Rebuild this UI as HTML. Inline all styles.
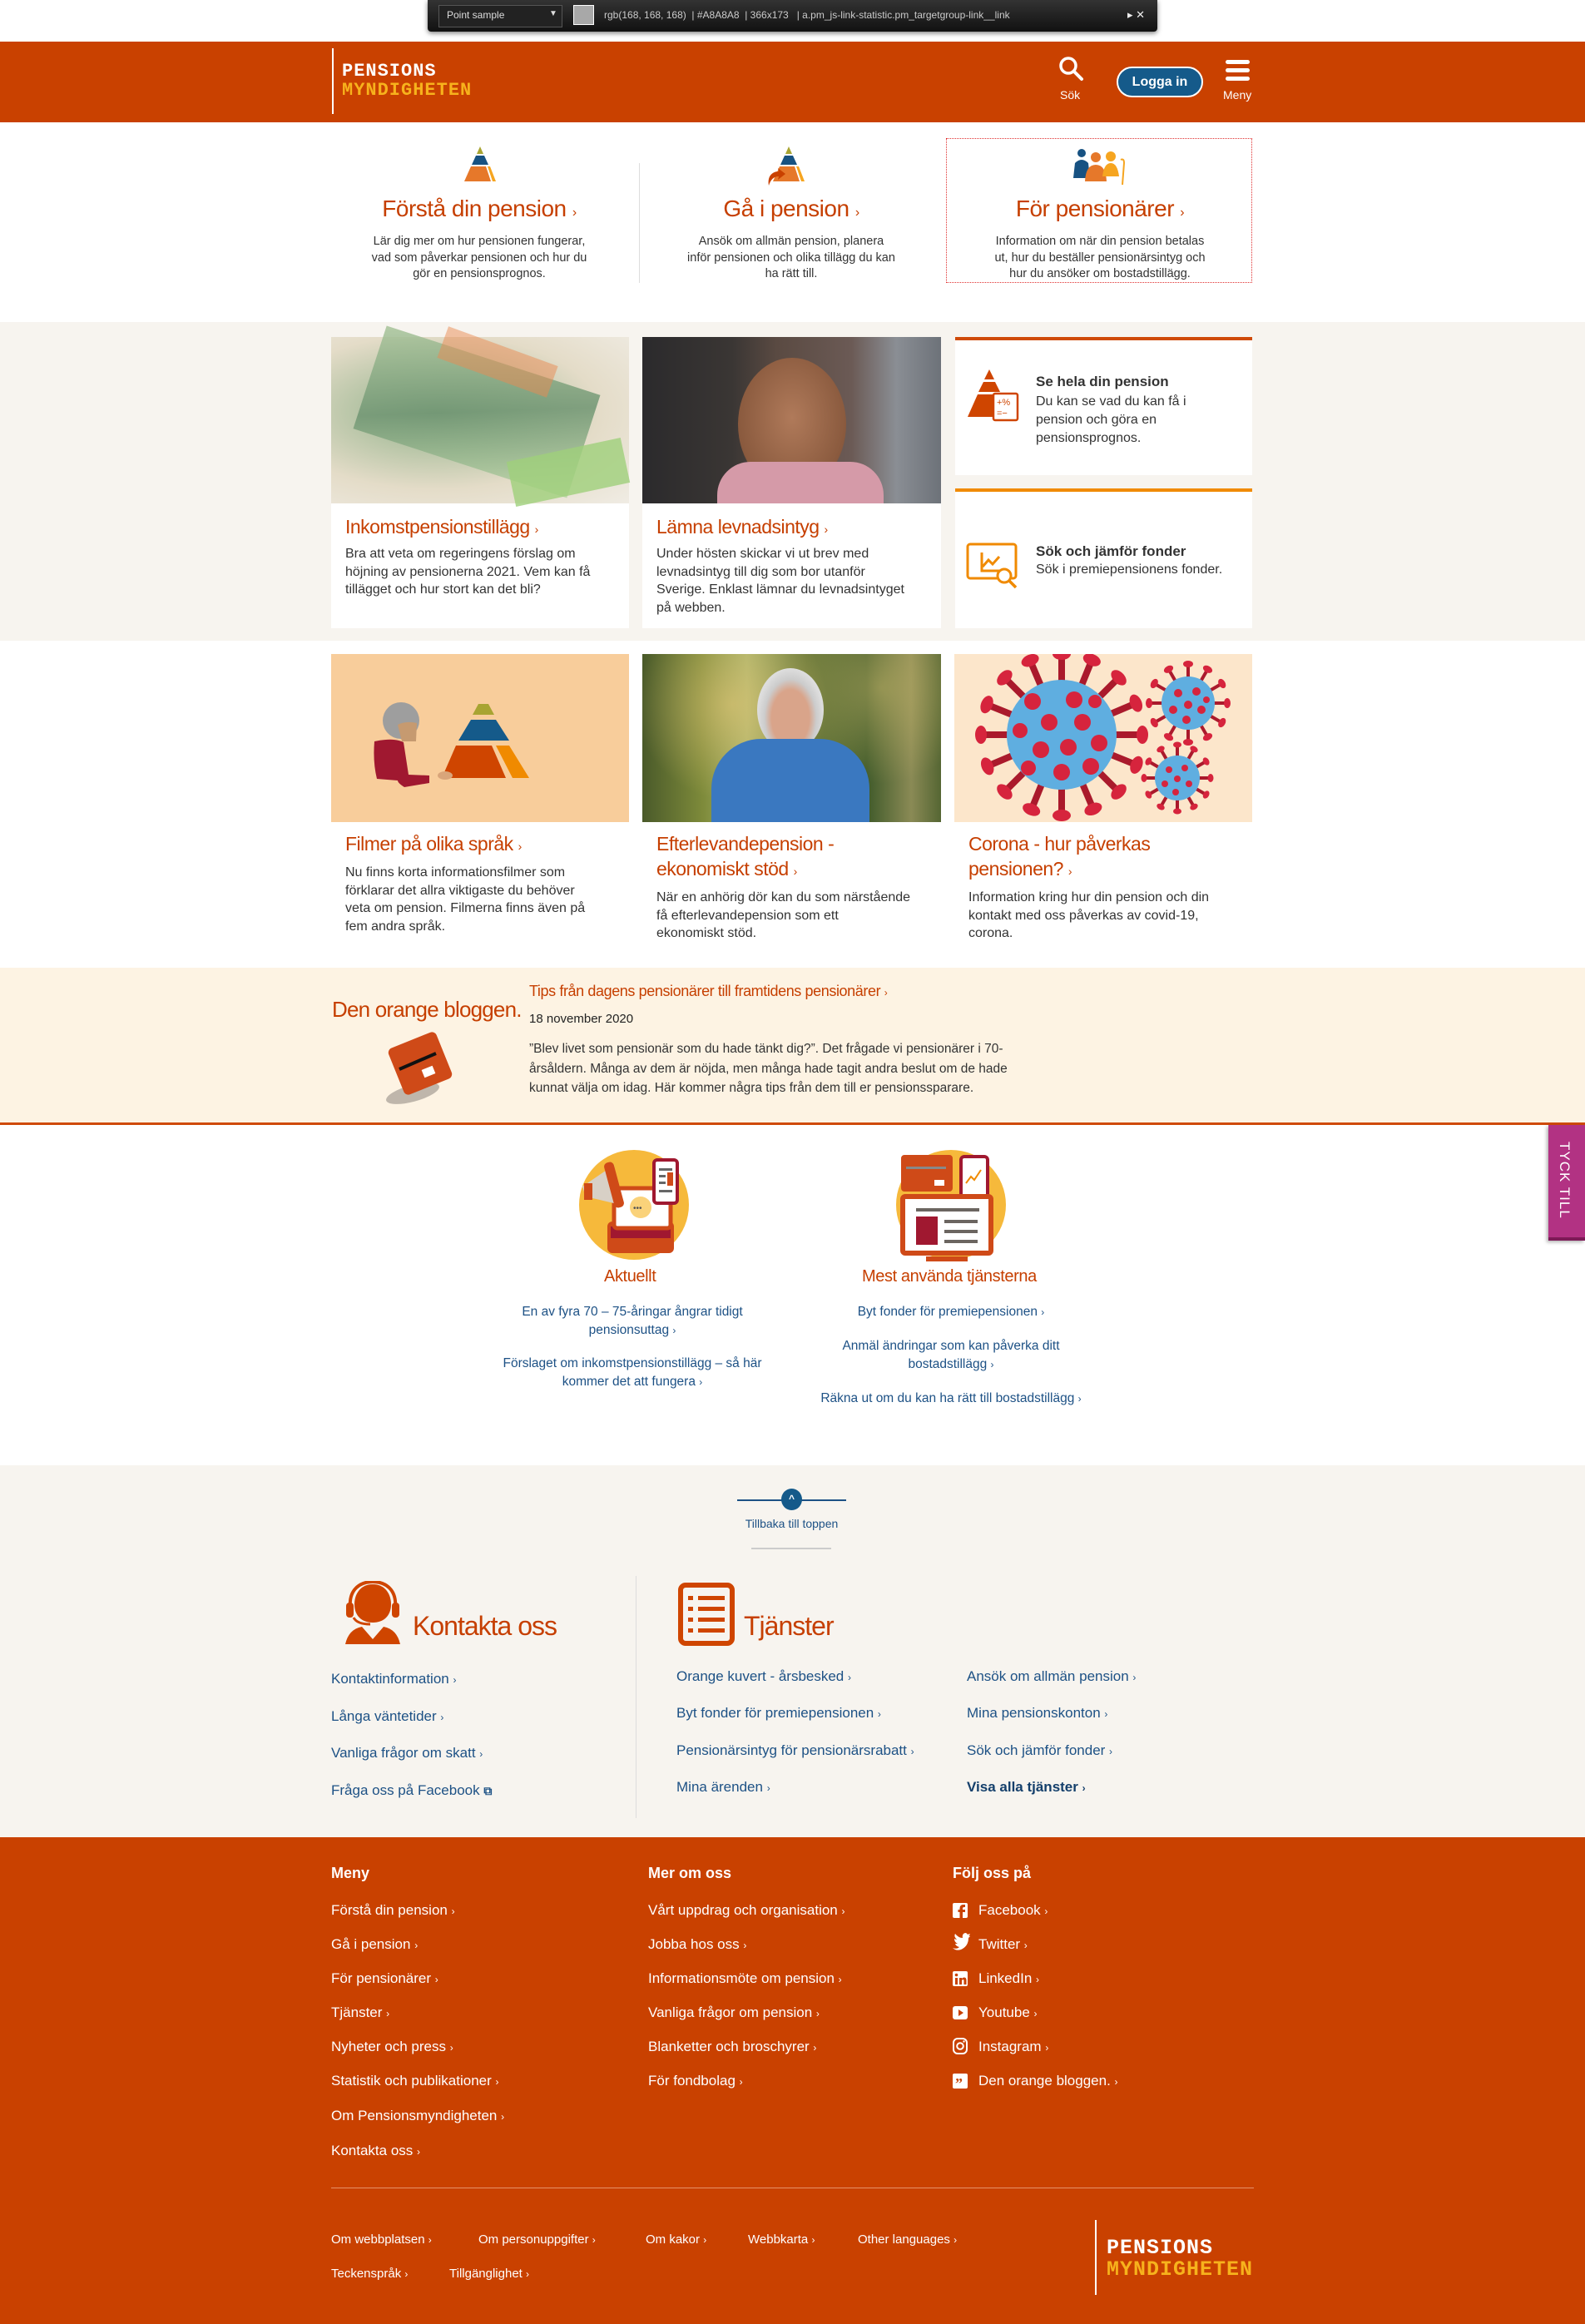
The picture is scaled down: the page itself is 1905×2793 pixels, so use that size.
<!DOCTYPE html>
<html><head><meta charset="utf-8">
<style>
*{margin:0;padding:0;box-sizing:border-box}
body{width:1905px;height:2793px;position:relative;overflow:hidden;background:#fff;font-family:"Liberation Sans",Arial,sans-serif;color:#333}
.a{position:absolute}
.t{position:absolute;white-space:nowrap}
.nav-t{font-size:28px;color:#c63f00;text-align:center;width:370px;letter-spacing:-0.5px}
.nav-d{font-size:14.5px;line-height:19.5px;text-align:center;width:370px;color:#333}
.card{position:absolute;background:#fff}
.ct{font-size:23px;color:#c63f00;letter-spacing:-0.5px;line-height:30px}
.cd{font-size:16px;line-height:21.5px;color:#333}
.lk{color:#1d5185;font-size:16px}
.fl{color:#fff;font-size:17px;position:absolute;white-space:nowrap;line-height:20px}
.ch{font-size:12px}
.logo1{font-family:"Liberation Mono",monospace;font-weight:bold;font-size:22px;letter-spacing:1px;line-height:23px}
</style></head><body>

<div class="a" style="left:514px;top:0;width:877px;height:38px;background:linear-gradient(#333,#111);border-radius:0 0 4px 4px;box-shadow:0 2px 6px rgba(0,0,0,.5)"></div>
<div class="a" style="left:527px;top:6px;width:149px;height:27px;border:1px solid #555;background:#222"></div>
<div class="t" style="left:537px;top:11px;color:#ddd;font-size:12px">Point sample</div>
<div class="t" style="left:660px;top:11px;color:#ddd;font-size:10px">▼</div>
<div class="a" style="left:689px;top:6px;width:25px;height:24px;background:#a8a8a8;border:1px solid #fff"></div>
<div class="t" style="left:726px;top:11px;color:#ccc;font-size:12px">rgb(168, 168, 168) &nbsp;| #A8A8A8 &nbsp;| 366x173 &nbsp; | a.pm_js-link-statistic.pm_targetgroup-link__link</div>
<div class="t" style="left:1355px;top:10px;color:#eee;font-size:13px">▸ ✕</div>

<div class="a" style="left:0;top:50px;width:1905px;height:97px;background:#c94100"></div>
<div class="a" style="left:399px;top:58px;width:2px;height:79px;background:#fff"></div>
<div class="t logo1" style="left:411px;top:74px;color:#fff">PENSIONS</div>
<div class="t logo1" style="left:411px;top:97px;color:#f7b21c">MYNDIGHETEN</div>
<svg class="a" style="left:1272px;top:67px" width="32" height="32" viewBox="0 0 32 32"><circle cx="12" cy="12" r="9" fill="none" stroke="#fff" stroke-width="3.5"/><line x1="18.5" y1="18.5" x2="28" y2="28" stroke="#fff" stroke-width="4" stroke-linecap="round"/></svg>
<div class="t" style="left:1274px;top:106px;color:#fff;font-size:14px">Sök</div>
<div class="a" style="left:1342px;top:80px;width:104px;height:37px;border:2px solid #fff;border-radius:19px;background:#155a8a;color:#fff;font-weight:bold;font-size:16px;text-align:center;line-height:33px">Logga in</div>
<div class="a" style="left:1473px;top:72px;width:29px;height:5px;background:#fff;border-radius:3px"></div>
<div class="a" style="left:1473px;top:82px;width:29px;height:5px;background:#fff;border-radius:3px"></div>
<div class="a" style="left:1473px;top:92px;width:29px;height:5px;background:#fff;border-radius:3px"></div>
<div class="t" style="left:1470px;top:106px;color:#fff;font-size:14px">Meny</div>

<svg class="a" style="left:556px;top:176px" width="42" height="44" viewBox="0 0 42 44"><polygon points="21,0 25,9 17,9" fill="#a8a432"/><polygon points="16,11 26,11 31,22 11,22" fill="#175282"/><polygon points="10,24 28,24 34,42 2,42" fill="#e6782a"/><polygon points="30,24 33,24 40,42 36,42" fill="#f6a520"/></svg>
<svg class="a" style="left:920px;top:176px" width="50" height="48" viewBox="0 0 50 48"><polygon points="28,0 32,9 24,9" fill="#a8a432"/><polygon points="23,11 33,11 38,22 18,22" fill="#175282"/><polygon points="17,24 35,24 41,42 9,42" fill="#e6782a"/><polygon points="37,24 40,24 47,42 43,42" fill="#f6a520"/><path d="M4,47 C2,36 8,30 16,30 L15,26 L24,33 L15,40 L16,36 C10,36 6,40 4,47Z" fill="#c94100"/></svg>
<svg class="a" style="left:1287px;top:176px" width="70" height="48" viewBox="0 0 70 48"><circle cx="13" cy="8" r="5" fill="#175282"/><path d="M3,38 L5,20 Q13,12 21,20 L23,38Z" fill="#175282"/><circle cx="30" cy="13" r="6" fill="#e6782a"/><path d="M17,42 Q18,22 30,22 Q42,22 43,42Z" fill="#e6782a"/><circle cx="48" cy="12" r="6" fill="#f6a520"/><path d="M38,36 Q40,20 48,20 Q56,20 58,36Z" fill="#f6a520"/><path d="M60,16 Q64,14 64,20 L62,46" stroke="#f6a520" stroke-width="2" fill="none"/></svg>
<div class="a" style="left:768px;top:196px;width:1px;height:144px;background:#ddd"></div>
<div class="a" style="left:1137px;top:166px;width:368px;height:174px;border:1px dotted #e03030"></div>
<div class="t nav-t" style="left:391px;top:235px">Förstå din pension <span style="font-size:16px">›</span></div>
<div class="t nav-t" style="left:766px;top:235px">Gå i pension <span style="font-size:16px">›</span></div>
<div class="t nav-t" style="left:1137px;top:235px">För pensionärer <span style="font-size:16px">›</span></div>
<div class="a nav-d" style="left:391px;top:281px">Lär dig mer om hur pensionen fungerar,<br>vad som påverkar pensionen och hur du<br>gör en pensionsprognos.</div>
<div class="a nav-d" style="left:766px;top:281px">Ansök om allmän pension, planera<br>inför pensionen och olika tillägg du kan<br>ha rätt till.</div>
<div class="a nav-d" style="left:1137px;top:281px">Information om när din pension betalas<br>ut, hur du beställer pensionärsintyg och<br>hur du ansöker om bostadstillägg.</div>

<div class="a" style="left:0;top:387px;width:1905px;height:383px;background:#f7f4ef"></div>
<div class="card" style="left:398px;top:405px;width:358px;height:350px">
 <div class="a" style="left:0;top:0;width:358px;height:200px;background:radial-gradient(ellipse at 35% 45%,#8fa98a 0%,#b9c6a8 30%,#e4dcc8 60%,#f0ece4 100%)"></div>
 <div class="a" style="left:40px;top:25px;width:270px;height:130px;background:linear-gradient(160deg,#a8c49a,#6f9572 50%,#bcd7a8);transform:rotate(18deg);opacity:.85"></div>
 <div class="a" style="left:215px;top:135px;width:140px;height:55px;background:#9fd07a;transform:rotate(-12deg);opacity:.8"></div>
 <div class="a" style="left:130px;top:10px;width:140px;height:40px;background:#e98a52;transform:rotate(20deg);opacity:.5"></div>
 <div class="t ct" style="left:17px;top:213px">Inkomstpensionstillägg <span style="font-size:14px">›</span></div>
 <div class="a cd" style="left:17px;top:250px">Bra att veta om regeringens förslag om<br>höjning av pensionerna 2021. Vem kan få<br>tillägget och hur stort kan det bli?</div>
</div>
<div class="card" style="left:772px;top:405px;width:359px;height:350px">
 <div class="a" style="left:0;top:0;width:359px;height:200px;background:linear-gradient(90deg,#2b2a2c 0%,#3a3634 30%,#5a4a42 45%,#6b5a55 70%,#8a8e94 85%,#6d7279 100%)"></div>
 <div class="a" style="left:115px;top:25px;width:130px;height:160px;border-radius:50%;background:radial-gradient(ellipse at 50% 45%,#b07a5a,#8a5a3e 70%,#4a3a33)"></div>
 <div class="a" style="left:90px;top:150px;width:200px;height:50px;background:#d59aa8;border-radius:40px 40px 0 0"></div>
 <div class="t ct" style="left:17px;top:213px">Lämna levnadsintyg <span style="font-size:14px">›</span></div>
 <div class="a cd" style="left:17px;top:250px">Under hösten skickar vi ut brev med<br>levnadsintyg till dig som bor utanför<br>Sverige. Enklast lämnar du levnadsintyget<br>på webben.</div>
</div>
<div class="card" style="left:1148px;top:405px;width:357px;height:166px;border-top:4px solid #cf4a08">
 <svg class="a" style="left:13px;top:30px" width="66" height="70" viewBox="0 0 66 70"><polygon points="28,5 34,17 22,17" fill="#cf4500"/><polygon points="21,20 35,20 41,32 15,32" fill="#cf4500"/><polygon points="14,35 42,35 52,62 2,62" fill="#cf4500"/><rect x="33" y="34" width="29" height="32" rx="2" fill="#fff" stroke="#cf4500" stroke-width="2.5"/><text x="37" y="48" font-size="11" fill="#cf4500" font-family="Liberation Sans">+%</text><text x="37" y="61" font-size="11" fill="#cf4500" font-family="Liberation Sans">=−</text></svg>
 <div class="t" style="left:97px;top:40px;font-size:17px;font-weight:bold;color:#333">Se hela din pension</div>
 <div class="a" style="left:97px;top:63px;font-size:16px;line-height:22px;color:#333">Du kan se vad du kan få i<br>pension och göra en<br>pensionsprognos.</div>
</div>
<div class="card" style="left:1148px;top:587px;width:357px;height:168px;border-top:4px solid #f08a00">
 <svg class="a" style="left:13px;top:61px" width="66" height="58" viewBox="0 0 66 58"><rect x="2" y="2" width="58" height="41" rx="3" fill="none" stroke="#f08a00" stroke-width="3"/><polyline points="19,12 19,34 40,34" fill="none" stroke="#f08a00" stroke-width="3"/><polyline points="20,29 27,21 32,26 40,17" fill="none" stroke="#f08a00" stroke-width="3"/><circle cx="46" cy="40" r="8" fill="#fff" stroke="#f08a00" stroke-width="3"/><line x1="52" y1="46" x2="60" y2="54" stroke="#f08a00" stroke-width="3.5"/></svg>
 <div class="t" style="left:97px;top:62px;font-size:17px;font-weight:bold;color:#333">Sök och jämför fonder</div>
 <div class="t" style="left:97px;top:85px;font-size:16px;color:#333">Sök i premiepensionens fonder.</div>
</div>

<div class="a" style="left:398px;top:786px;width:358px;height:202px;background:#f8cd9b"></div>
<svg class="a" style="left:398px;top:786px" width="358" height="202" viewBox="0 0 358 202"><circle cx="84" cy="80" r="22" fill="#9e9e9e"/><path d="M80,85 Q90,80 103,83 L102,105 L85,105Z" fill="#c69a70"/><path d="M52,105 Q75,100 87,106 L93,145 L118,146 L118,155 L88,160 Q80,155 80,152 L55,150 Q50,130 52,105Z" fill="#a01830"/><polygon points="177,60 189,60 196,73 170,73" fill="#a8a432"/><polygon points="168,79 198,79 214,104 153,104" fill="#155a8a"/><polygon points="150,110 193,110 210,149 133,149" fill="#cf4500"/><polygon points="198,110 214,110 238,149 218,149" fill="#f08a00"/><ellipse cx="137" cy="146" rx="9" ry="5" fill="#d9a57a"/></svg>
<div class="a" style="left:772px;top:786px;width:359px;height:202px;background:linear-gradient(90deg,#4a5a2a 0%,#7d8a3a 20%,#a9b36a 35%,#6c7a3a 55%,#3f5a2a 75%,#8a8a55 90%,#556633 100%)"></div>
<div class="a" style="left:772px;top:786px;width:359px;height:202px;background:radial-gradient(circle at 30% 30%,rgba(230,200,120,.6),transparent 40%),radial-gradient(circle at 80% 20%,rgba(210,190,110,.5),transparent 35%)"></div>
<div class="a" style="left:910px;top:803px;width:80px;height:100px;border-radius:50%;background:radial-gradient(ellipse at 50% 60%,#d9a48a 40%,#ccc 55%,#ddd 70%)"></div>
<div class="a" style="left:855px;top:888px;width:190px;height:100px;border-radius:60px 60px 0 0;background:#3a78c0"></div>
<div class="a" style="left:1147px;top:786px;width:358px;height:202px;background:#fce6cb"></div>
<svg class="a" style="left:1147px;top:786px" width="358" height="202" viewBox="0 0 358 202">
<defs>
<g id="sp"><rect x="-4" y="-94" width="8" height="32" fill="#aa1a2c"/><ellipse cx="0" cy="-97" rx="11" ry="7" fill="#d6243d"/></g>
<g id="sp2"><rect x="-2" y="-46" width="4" height="16" fill="#aa1a2c"/><ellipse cx="0" cy="-47" rx="6" ry="4" fill="#d6243d"/></g>
<g id="sp3"><rect x="-2" y="-39" width="4" height="13" fill="#aa1a2c"/><ellipse cx="0" cy="-40" rx="5" ry="3.5" fill="#d6243d"/></g>
<clipPath id="cp"><rect width="358" height="202"/></clipPath>
</defs>
<g clip-path="url(#cp)">
<g transform="translate(129,97)">
<use href="#sp"/><use href="#sp" transform="rotate(22)"/><use href="#sp" transform="rotate(45)"/><use href="#sp" transform="rotate(67)"/><use href="#sp" transform="rotate(90)"/><use href="#sp" transform="rotate(112)"/><use href="#sp" transform="rotate(135)"/><use href="#sp" transform="rotate(157)"/><use href="#sp" transform="rotate(180)"/><use href="#sp" transform="rotate(202)"/><use href="#sp" transform="rotate(225)"/><use href="#sp" transform="rotate(247)"/><use href="#sp" transform="rotate(270)"/><use href="#sp" transform="rotate(292)"/><use href="#sp" transform="rotate(315)"/><use href="#sp" transform="rotate(337)"/>
<circle r="66" fill="#5faee0"/>
<g fill="#d6243d"><circle cx="-35" cy="-40" r="10"/><circle cx="15" cy="-42" r="10"/><circle cx="-15" cy="-15" r="10"/><circle cx="25" cy="-15" r="10"/><circle cx="-50" cy="-5" r="9"/><circle cx="45" cy="10" r="10"/><circle cx="-25" cy="18" r="10"/><circle cx="8" cy="15" r="10"/><circle cx="-40" cy="40" r="9"/><circle cx="0" cy="45" r="10"/><circle cx="35" cy="38" r="10"/><circle cx="40" cy="-40" r="8"/></g>
</g>
<g transform="translate(281,59)">
<use href="#sp2"/><use href="#sp2" transform="rotate(30)"/><use href="#sp2" transform="rotate(60)"/><use href="#sp2" transform="rotate(90)"/><use href="#sp2" transform="rotate(120)"/><use href="#sp2" transform="rotate(150)"/><use href="#sp2" transform="rotate(180)"/><use href="#sp2" transform="rotate(210)"/><use href="#sp2" transform="rotate(240)"/><use href="#sp2" transform="rotate(270)"/><use href="#sp2" transform="rotate(300)"/><use href="#sp2" transform="rotate(330)"/>
<circle r="32" fill="#5faee0"/>
<g fill="#d6243d"><circle cx="-12" cy="-12" r="5"/><circle cx="10" cy="-14" r="5"/><circle cx="0" cy="2" r="5"/><circle cx="-18" cy="8" r="5"/><circle cx="16" cy="8" r="5"/><circle cx="-2" cy="20" r="5"/><circle cx="22" cy="-4" r="4"/></g>
</g>
<g transform="translate(268,149)">
<use href="#sp3"/><use href="#sp3" transform="rotate(30)"/><use href="#sp3" transform="rotate(60)"/><use href="#sp3" transform="rotate(90)"/><use href="#sp3" transform="rotate(120)"/><use href="#sp3" transform="rotate(150)"/><use href="#sp3" transform="rotate(180)"/><use href="#sp3" transform="rotate(210)"/><use href="#sp3" transform="rotate(240)"/><use href="#sp3" transform="rotate(270)"/><use href="#sp3" transform="rotate(300)"/><use href="#sp3" transform="rotate(330)"/>
<circle r="27" fill="#5faee0"/>
<g fill="#d6243d"><circle cx="-10" cy="-10" r="4"/><circle cx="9" cy="-12" r="4"/><circle cx="0" cy="1" r="4"/><circle cx="-15" cy="7" r="4"/><circle cx="14" cy="7" r="4"/><circle cx="-2" cy="17" r="4"/></g>
</g>
</g>
</svg>
<div class="t ct" style="left:415px;top:999px">Filmer på olika språk <span style="font-size:14px">›</span></div>
<div class="a cd" style="left:415px;top:1038px">Nu finns korta informationsfilmer som<br>förklarar det allra viktigaste du behöver<br>veta om pension. Filmerna finns även på<br>fem andra språk.</div>
<div class="a ct" style="left:789px;top:999px">Efterlevandepension -<br>ekonomiskt stöd <span style="font-size:14px">›</span></div>
<div class="a cd" style="left:789px;top:1068px">När en anhörig dör kan du som närstående<br>få efterlevandepension som ett<br>ekonomiskt stöd.</div>
<div class="a ct" style="left:1164px;top:999px">Corona - hur påverkas<br>pensionen? <span style="font-size:14px">›</span></div>
<div class="a cd" style="left:1164px;top:1068px">Information kring hur din pension och din<br>kontakt med oss påverkas av covid-19,<br>corona.</div>

<div class="a" style="left:0;top:1163px;width:1905px;height:189px;background:#fdf3e3;border-bottom:3px solid #cf4a08"></div>
<div class="t" style="left:399px;top:1198px;font-size:26px;color:#c63f00;letter-spacing:-0.8px">Den orange bloggen.</div>
<svg class="a" style="left:458px;top:1228px" width="100" height="102" viewBox="0 0 100 102"><ellipse cx="38" cy="86" rx="33" ry="10" fill="#bfb6ab" transform="rotate(-15 38 86)"/><rect x="16" y="20" width="62" height="60" rx="6" fill="#cf4a18" transform="rotate(-22 47 50)"/><line x1="22" y1="57" x2="66" y2="38" stroke="#111" stroke-width="4"/><rect x="50" y="55" width="14" height="10" fill="#fff" transform="rotate(-22 57 60)"/></svg>
<div class="t" style="left:636px;top:1181px;font-size:18px;color:#c63f00;letter-spacing:-0.4px">Tips från dagens pensionärer till framtidens pensionärer <span style="font-size:12px">›</span></div>
<div class="t" style="left:636px;top:1216px;font-size:15px;color:#222">18 november 2020</div>
<div class="a" style="left:636px;top:1249px;font-size:15.5px;line-height:23.5px;color:#333">”Blev livet som pensionär som du hade tänkt dig?”. Det frågade vi pensionärer i 70-<br>årsåldern. Många av dem är nöjda, men många hade tagit andra beslut om de hade<br>kunnat välja om idag. Här kommer några tips från dem till er pensionssparare.</div>

<div class="a" style="left:1861px;top:1352px;width:44px;height:139px;background:#b23283;border-bottom:4px solid #7d1a57;box-shadow:-2px 2px 4px rgba(0,0,0,.3)"></div>
<div class="a" style="left:1870px;top:1372px;writing-mode:vertical-rl;color:#fff;font-size:17px;letter-spacing:1px">TYCK TILL</div>

<svg class="a" style="left:690px;top:1378px" width="150" height="142" viewBox="0 0 150 142"><ellipse cx="72" cy="70" rx="66" ry="66" fill="#f6b93b"/><rect x="40" y="90" width="80" height="38" rx="6" fill="#cf4a18"/><rect x="44" y="96" width="72" height="14" fill="#a01830"/><rect x="48" y="50" width="68" height="48" rx="4" fill="#fff" stroke="#cf4a18" stroke-width="5"/><circle cx="80" cy="73" r="13" fill="#fad27a"/><text x="71" y="77" font-size="10" fill="#555" font-family="Liberation Sans">•••</text><rect x="96" y="16" width="28" height="52" rx="4" fill="#fff" stroke="#a01830" stroke-width="4"/><g fill="#666"><rect x="102" y="26" width="16" height="3"/><rect x="102" y="34" width="8" height="3"/><rect x="102" y="42" width="8" height="3"/><rect x="102" y="52" width="16" height="3"/></g><rect x="112" y="31" width="7" height="16" fill="#cf4a18"/><polygon points="10,48 48,22 56,70 14,60" fill="#d8d0c6"/><rect x="42" y="18" width="12" height="56" rx="5" fill="#cf4a18" transform="rotate(-15 48 46)"/><rect x="12" y="44" width="10" height="20" fill="#cf4a18"/></svg>
<svg class="a" style="left:1075px;top:1378px" width="140" height="142" viewBox="0 0 140 142"><ellipse cx="68" cy="70" rx="66" ry="66" fill="#f6b93b"/><rect x="8" y="10" width="62" height="44" rx="4" fill="#cf4a18"/><rect x="14" y="24" width="48" height="3" fill="#888"/><rect x="48" y="40" width="12" height="7" fill="#fff"/><rect x="80" y="12" width="32" height="54" rx="4" fill="#fff" stroke="#a01830" stroke-width="4"/><polyline points="86,44 92,36 96,40 104,28" stroke="#f08a00" stroke-width="2" fill="none"/><rect x="10" y="60" width="106" height="68" rx="3" fill="#fff" stroke="#cf4a18" stroke-width="6"/><g fill="#6b6560"><rect x="26" y="74" width="76" height="4"/><rect x="60" y="88" width="40" height="4"/><rect x="60" y="100" width="40" height="4"/><rect x="60" y="112" width="40" height="4"/></g><rect x="26" y="84" width="26" height="34" fill="#a01830"/><rect x="38" y="132" width="50" height="6" fill="#cf4a18"/></svg>
<div class="t" style="left:726px;top:1523px;font-size:20px;color:#c63f00;letter-spacing:-0.4px">Aktuellt</div>
<div class="t" style="left:1036px;top:1523px;font-size:20px;color:#c63f00;letter-spacing:-0.4px">Mest använda tjänsterna</div>
<div class="a lk" style="left:560px;top:1566px;width:400px;text-align:center;line-height:21.5px;font-size:15.5px">En av fyra 70 – 75-åringar ångrar tidigt<br>pensionsuttag <span class="ch">›</span></div>
<div class="a lk" style="left:560px;top:1628px;width:400px;text-align:center;line-height:21.5px;font-size:15.5px">Förslaget om inkomstpensionstillägg – så här<br>kommer det att fungera <span class="ch">›</span></div>
<div class="a lk" style="left:943px;top:1566px;width:400px;text-align:center;line-height:21.5px;font-size:15.5px">Byt fonder för premiepensionen <span class="ch">›</span></div>
<div class="a lk" style="left:943px;top:1607px;width:400px;text-align:center;line-height:21.5px;font-size:15.5px">Anmäl ändringar som kan påverka ditt<br>bostadstillägg <span class="ch">›</span></div>
<div class="a lk" style="left:943px;top:1670px;width:400px;text-align:center;line-height:21.5px;font-size:15.5px">Räkna ut om du kan ha rätt till bostadstillägg <span class="ch">›</span></div>

<div class="a" style="left:0;top:1761px;width:1905px;height:447px;background:#f7f4ef"></div>
<div class="a" style="left:886px;top:1802px;width:131px;height:2px;background:#1d5185"></div>
<div class="a" style="left:939px;top:1789px;width:25px;height:26px;border-radius:50%;background:#155a8a;color:#fff;font-size:12px;text-align:center;line-height:24px;font-weight:bold">^</div>
<div class="t lk" style="left:886px;top:1823px;font-size:14px;width:131px;text-align:center">Tillbaka till toppen</div>
<div class="a" style="left:903px;top:1860px;width:96px;height:2px;background:#ccc"></div>
<svg class="a" style="left:413px;top:1900px" width="70" height="78" viewBox="0 0 70 78"><path d="M35,4 C20,4 13,16 13,28 C13,42 22,50 35,50 C48,50 57,42 57,28 C57,16 50,4 35,4Z" fill="#cf4500"/><path d="M8,32 C6,10 20,1 35,1 C50,1 64,10 62,32" fill="none" stroke="#cf4500" stroke-width="4"/><rect x="3" y="26" width="9" height="18" rx="4" fill="#cf4500"/><rect x="58" y="26" width="9" height="18" rx="4" fill="#cf4500"/><path d="M12,44 Q16,52 32,52" fill="none" stroke="#cf4500" stroke-width="3"/><path d="M2,76 Q6,58 22,55 L35,70 L48,55 Q64,58 68,76Z" fill="#cf4500"/></svg>
<div class="t" style="left:496px;top:1936px;font-size:32px;color:#c63f00;letter-spacing:-1px">Kontakta oss</div>
<div class="a" style="left:764px;top:1894px;width:1px;height:291px;background:#ddd"></div>
<svg class="a" style="left:815px;top:1902px" width="68" height="76" viewBox="0 0 68 76"><rect x="3" y="3" width="62" height="70" rx="6" fill="none" stroke="#cf4500" stroke-width="6"/><g fill="#cf4500"><rect x="12" y="16" width="6" height="5"/><rect x="24" y="16" width="32" height="5"/><rect x="12" y="29" width="6" height="5"/><rect x="24" y="29" width="32" height="5"/><rect x="12" y="42" width="6" height="5"/><rect x="24" y="42" width="32" height="5"/><rect x="12" y="55" width="6" height="5"/><rect x="24" y="55" width="32" height="5"/></g></svg>
<div class="t" style="left:894px;top:1936px;font-size:32px;color:#c63f00;letter-spacing:-1px">Tjänster</div>
<div class="t lk" style="left:398px;top:2008px;font-size:17px">Kontaktinformation <span class="ch">›</span></div>
<div class="t lk" style="left:398px;top:2053px;font-size:17px">Långa väntetider <span class="ch">›</span></div>
<div class="t lk" style="left:398px;top:2097px;font-size:17px">Vanliga frågor om skatt <span class="ch">›</span></div>
<div class="t lk" style="left:398px;top:2142px;font-size:17px">Fråga oss på Facebook <span style="font-size:14px;font-weight:bold">⧉</span></div>
<div class="t lk" style="left:813px;top:2005px;font-size:17px">Orange kuvert - årsbesked <span class="ch">›</span></div>
<div class="t lk" style="left:813px;top:2049px;font-size:17px">Byt fonder för premiepensionen <span class="ch">›</span></div>
<div class="t lk" style="left:813px;top:2094px;font-size:17px">Pensionärsintyg för pensionärsrabatt <span class="ch">›</span></div>
<div class="t lk" style="left:813px;top:2138px;font-size:17px">Mina ärenden <span class="ch">›</span></div>
<div class="t lk" style="left:1162px;top:2005px;font-size:17px">Ansök om allmän pension <span class="ch">›</span></div>
<div class="t lk" style="left:1162px;top:2049px;font-size:17px">Mina pensionskonton <span class="ch">›</span></div>
<div class="t lk" style="left:1162px;top:2094px;font-size:17px">Sök och jämför fonder <span class="ch">›</span></div>
<div class="t lk" style="left:1162px;top:2138px;font-size:17px;font-weight:bold;color:#143f6b">Visa alla tjänster <span class="ch">›</span></div>

<div class="a" style="left:0;top:2208px;width:1905px;height:585px;background:#c94100"></div>
<div class="fl" style="left:398px;top:2241px;font-weight:bold;font-size:18px">Meny</div>
<div class="fl" style="left:779px;top:2241px;font-weight:bold;font-size:18px">Mer om oss</div>
<div class="fl" style="left:1145px;top:2241px;font-weight:bold;font-size:18px">Följ oss på</div>

<div class="fl" style="left:398px;top:2286px">Förstå din pension <span class="ch">›</span></div>
<div class="fl" style="left:398px;top:2327px">Gå i pension <span class="ch">›</span></div>
<div class="fl" style="left:398px;top:2368px">För pensionärer <span class="ch">›</span></div>
<div class="fl" style="left:398px;top:2409px">Tjänster <span class="ch">›</span></div>
<div class="fl" style="left:398px;top:2450px">Nyheter och press <span class="ch">›</span></div>
<div class="fl" style="left:398px;top:2491px">Statistik och publikationer <span class="ch">›</span></div>
<div class="fl" style="left:398px;top:2533px">Om Pensionsmyndigheten <span class="ch">›</span></div>
<div class="fl" style="left:398px;top:2575px">Kontakta oss <span class="ch">›</span></div>

<div class="fl" style="left:779px;top:2286px">Vårt uppdrag och organisation <span class="ch">›</span></div>
<div class="fl" style="left:779px;top:2327px">Jobba hos oss <span class="ch">›</span></div>
<div class="fl" style="left:779px;top:2368px">Informationsmöte om pension <span class="ch">›</span></div>
<div class="fl" style="left:779px;top:2409px">Vanliga frågor om pension <span class="ch">›</span></div>
<div class="fl" style="left:779px;top:2450px">Blanketter och broschyrer <span class="ch">›</span></div>
<div class="fl" style="left:779px;top:2491px">För fondbolag <span class="ch">›</span></div>

<div class="fl" style="left:1176px;top:2286px">Facebook <span class="ch">›</span></div>
<div class="fl" style="left:1176px;top:2327px">Twitter <span class="ch">›</span></div>
<div class="fl" style="left:1176px;top:2368px">LinkedIn <span class="ch">›</span></div>
<div class="fl" style="left:1176px;top:2409px">Youtube <span class="ch">›</span></div>
<div class="fl" style="left:1176px;top:2450px">Instagram <span class="ch">›</span></div>
<div class="fl" style="left:1176px;top:2491px">Den orange bloggen. <span class="ch">›</span></div>

<svg class="a" style="left:1144px;top:2286px" width="24" height="240" viewBox="0 0 24 240">
<rect x="1" y="1" width="18" height="18" rx="2" fill="#fff"/><path d="M13,19 L13,12 L16,12 L16,9 L13,9 L13,7.5 Q13,6 15,6 L16,6 L16,3 L14,3 Q9.5,3 9.5,7.5 L9.5,9 L7.5,9 L7.5,12 L9.5,12 L9.5,19Z" fill="#c94100"/>
<path d="M1,55 Q6,57 9,54 Q5,53 4,50 Q6,50 7,50 Q3,48 3,44 Q5,45 6,45 Q2,41 4,38 Q8,43 13,43 Q12,38 16,37 Q18,37 19,39 Q21,38 22,38 Q21,40 20,41 Q21,40 22,41 Q21,42 20,43 Q20,53 11,57 Q5,59 1,55Z" fill="#fff"/>
<rect x="1" y="83" width="18" height="18" rx="2" fill="#fff"/><rect x="4" y="91" width="3" height="8" fill="#c94100"/><circle cx="5.5" cy="87.5" r="1.8" fill="#c94100"/><path d="M9,91 L12,91 L12,92 Q13,90.5 15,90.5 Q17.5,90.5 17.5,94 L17.5,99 L14.5,99 L14.5,94.5 Q14.5,93 13.5,93 Q12,93 12,95 L12,99 L9,99Z" fill="#c94100"/>
<rect x="1" y="125" width="18" height="16" rx="3" fill="#fff"/><polygon points="8,129 14,133 8,137" fill="#c94100"/>
<rect x="2" y="164" width="16" height="18" rx="5" fill="none" stroke="#fff" stroke-width="2"/><circle cx="10" cy="173" r="3.8" fill="none" stroke="#fff" stroke-width="2"/><circle cx="14.5" cy="167.5" r="1.2" fill="#fff"/>
<rect x="1" y="206" width="18" height="18" rx="2" fill="#fff"/><text x="4" y="224" font-size="18" font-weight="bold" fill="#c94100" font-family="Liberation Serif">”</text>
</svg>

<div class="a" style="left:398px;top:2629px;width:1109px;height:1px;background:#e6926a"></div>
<div class="fl" style="left:398px;top:2682px;font-size:15px">Om webbplatsen <span class="ch">›</span></div>
<div class="fl" style="left:575px;top:2682px;font-size:15px">Om personuppgifter <span class="ch">›</span></div>
<div class="fl" style="left:776px;top:2682px;font-size:15px">Om kakor <span class="ch">›</span></div>
<div class="fl" style="left:899px;top:2682px;font-size:15px">Webbkarta <span class="ch">›</span></div>
<div class="fl" style="left:1031px;top:2682px;font-size:15px">Other languages <span class="ch">›</span></div>
<div class="fl" style="left:398px;top:2723px;font-size:15px">Teckenspråk <span class="ch">›</span></div>
<div class="fl" style="left:540px;top:2723px;font-size:15px">Tillgänglighet <span class="ch">›</span></div>
<div class="a" style="left:1316px;top:2668px;width:2px;height:90px;background:#fff"></div>
<div class="t logo1" style="left:1330px;top:2688px;color:#fff;font-size:25px;line-height:27px">PENSIONS</div>
<div class="t logo1" style="left:1330px;top:2714px;color:#f7b21c;font-size:25px;line-height:27px">MYNDIGHETEN</div>

</body></html>
